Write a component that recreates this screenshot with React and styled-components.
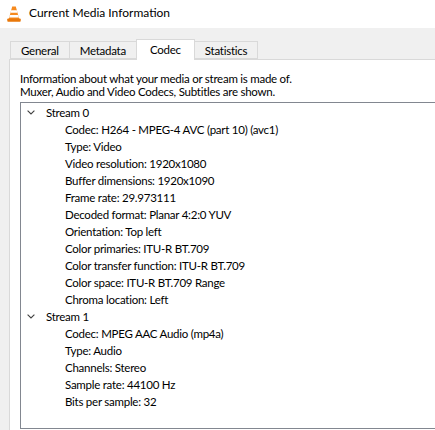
import React from "react";
import styled, { createGlobalStyle } from "styled-components";

const Global = createGlobalStyle`
  html, body { margin: 0; padding: 0; }
  body { width: 435px; height: 430px; overflow: hidden; background: #f0f0f0;
    font-family: Lato, "Noto Sans", sans-serif; font-size: 11.5px; letter-spacing: -0.25px; color: #000; }
`;

const Window = styled.div`
  width: 435px;
  height: 430px;
  display: flex;
  flex-direction: column;
  background: #f0f0f0;
  overflow: hidden;
`;

const TitleBar = styled.div`
  height: 28px;
  flex: none;
  background: #fff;
  display: flex;
  align-items: center;
  padding-left: 7px;
  gap: 8px;
`;

const Title = styled.span`
  font-size: 12px;
  letter-spacing: 0;
  color: #000;
  line-height: 16px;
  margin-top: -2px;
`;

const Body = styled.div`
  flex: 1;
  display: flex;
  flex-direction: column;
  padding: 11px 0 0 9px;
  min-height: 0;
`;

const TabList = styled.div`
  display: flex;
  align-items: flex-end;
  height: 20px;
  padding-left: 1px;
  position: relative;
  z-index: 1;
`;

const Tab = styled.div`
  box-sizing: border-box;
  height: ${(p) => (p.$active ? "21px" : "18px")};
  margin-bottom: ${(p) => (p.$active ? "-1px" : "0")};
  padding: 0 ${(p) => (p.$active ? "13px" : "10px")};
  margin-left: ${(p) => (p.$first ? "0" : "-1px")};
  border: 1px solid #d9d9d9;
  border-bottom: ${(p) => (p.$active ? "none" : "1px solid #d9d9d9")};
  background: ${(p) => (p.$active ? "#fff" : "#f0f0f0")};
  display: flex;
  align-items: center;
  padding-top: ${(p) => (p.$active ? "0" : "1px")};
  line-height: 14px;
  white-space: nowrap;
`;

const Pane = styled.div`
  flex: 1;
  width: 440px;
  background: #fff;
  border: 1px solid #d9d9d9;
  border-right: none;
  border-bottom: none;
  padding: 12px 0 0 10px;
  display: flex;
  flex-direction: column;
  min-height: 0;
`;

const Description = styled.p`
  margin: 0 0 4px 0;
  line-height: 13px;
`;

const Tree = styled.div`
  box-sizing: border-box;
  height: 327px;
  width: 440px;
  border: 1px solid #828790;
  border-right: none;
  padding: 1px 0 0 0;
  display: flex;
  flex-direction: column;
`;

const Row = styled.div`
  height: 17px;
  display: flex;
  align-items: center;
  padding-left: ${(p) => (p.$child ? "44px" : "5px")};
  white-space: nowrap;
`;

const Toggle = styled.span`
  width: 19px;
  display: flex;
  align-items: center;
  justify-content: flex-start;
  padding-left: 1px;
`;

const VlcIcon = () => (
  <svg width="14" height="16" viewBox="0 0 14 16">
    <path d="M5.2 0.5 L8.8 0.5 L12.2 13 L1.8 13 Z" fill="#f68a1e" />
    <path d="M4.2 4.2 L9.8 4.2 L10.5 6.8 L3.5 6.8 Z" fill="#fff" />
    <path d="M2.9 9 L11.1 9 L11.8 11.6 L2.2 11.6 Z" fill="#fff" />
    <rect x="0.3" y="12.5" width="13.4" height="3.2" rx="0.8" fill="#e9780a" />
  </svg>
);

const Chevron = () => (
  <svg width="8" height="5" viewBox="0 0 8 5">
    <path d="M0.6 0.6 L4 4 L7.4 0.6" fill="none" stroke="#404040" strokeWidth="1.1" />
  </svg>
);

const streams = [
  {
    name: "Stream 0",
    items: [
      "Codec: H264 - MPEG-4 AVC (part 10) (avc1)",
      "Type: Video",
      "Video resolution: 1920x1080",
      "Buffer dimensions: 1920x1090",
      "Frame rate: 29.973111",
      "Decoded format: Planar 4:2:0 YUV",
      "Orientation: Top left",
      "Color primaries: ITU-R BT.709",
      "Color transfer function: ITU-R BT.709",
      "Color space: ITU-R BT.709 Range",
      "Chroma location: Left",
    ],
  },
  {
    name: "Stream 1",
    items: [
      "Codec: MPEG AAC Audio (mp4a)",
      "Type: Audio",
      "Channels: Stereo",
      "Sample rate: 44100 Hz",
      "Bits per sample: 32",
    ],
  },
];

const tabs = ["General", "Metadata", "Codec", "Statistics"];

export default function App() {
  return (
    <Window>
      <Global />
      <TitleBar>
        <VlcIcon />
        <Title>Current Media Information</Title>
      </TitleBar>
      <Body>
        <TabList>
          {tabs.map((t, i) => (
            <Tab key={t} $first={i === 0} $active={t === "Codec"}>
              {t}
            </Tab>
          ))}
        </TabList>
        <Pane>
          <Description>
            Information about what your media or stream is made of.
            <br />
            Muxer, Audio and Video Codecs, Subtitles are shown.
          </Description>
          <Tree>
            {streams.map((s) => (
              <React.Fragment key={s.name}>
                <Row>
                  <Toggle>
                    <Chevron />
                  </Toggle>
                  {s.name}
                </Row>
                {s.items.map((it) => (
                  <Row key={it} $child>
                    {it}
                  </Row>
                ))}
              </React.Fragment>
            ))}
          </Tree>
        </Pane>
      </Body>
    </Window>
  );
}
